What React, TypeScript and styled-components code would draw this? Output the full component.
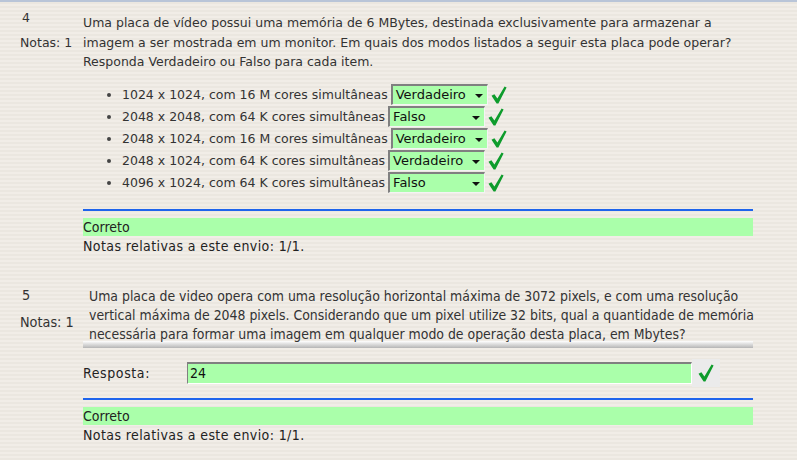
import React from "react";
import styled, { createGlobalStyle } from "styled-components";

const GlobalStyle = createGlobalStyle`
  html, body {
    margin: 0;
    padding: 0;
  }
  body {
    background-color: #efebe4;
    background-image: repeating-linear-gradient(
      to bottom,
      #f1ede7 0px,
      #f1ede7 2px,
      #ebe7e0 2px,
      #ebe7e0 4px
    );
    color: #333;
    font-family: "DejaVu Sans", Verdana, sans-serif;
  }
`;

const condensed = `"DejaVu Sans Condensed", "DejaVu Sans", sans-serif`;

const Page = styled.div`
  border-top: 2px solid #b9c5d8;
  width: 797px;
  height: 458px;
  overflow: hidden;
`;

const Question = styled.div<{ $top: number }>`
  display: grid;
  grid-template-columns: 83px 670px;
  padding-top: ${({ $top }) => $top}px;
`;

const Info = styled.div<{ $condensed?: boolean }>`
  padding-left: 20px;
  font-family: ${({ $condensed }) => ($condensed ? condensed : `"DejaVu Sans", sans-serif`)};
  font-size: ${({ $condensed }) => ($condensed ? "14.3px" : "12.5px")};
  line-height: 20px;
`;

const Number = styled.div<{ $top: number }>`
  padding-left: 2px;
  margin-top: ${({ $top }) => $top}px;
`;

const Grade = styled.div<{ $gap: number }>`
  margin-top: ${({ $gap }) => $gap}px;
`;

const Content = styled.div``;

const Text = styled.div`
  font-size: 12.5px;
  line-height: 19.5px;
  white-space: nowrap;
`;

const CondensedText = styled.div`
  font-family: ${condensed};
  font-size: 13.9px;
  line-height: 19px;
  padding-left: 6px;
  white-space: nowrap;
`;

const Options = styled.ul`
  margin: 12px 0 0;
  padding-left: 39px;
  font-size: 12.5px;
  list-style: disc;
`;

const Option = styled.li`
  height: 22px;
  line-height: 22px;

  &::marker {
    color: #444;
  }
`;

const OptionRow = styled.span`
  display: inline-flex;
  align-items: center;
  gap: 3px;
  vertical-align: top;
  height: 22px;
`;

const Select = styled.span`
  display: inline-flex;
  align-items: center;
  justify-content: space-between;
  box-sizing: border-box;
  width: 97px;
  height: 21px;
  padding: 0 4px 0 3px;
  background: #aaffaa;
  border-top: 2px solid #808080;
  border-left: 2px solid #808080;
  border-right: 1px solid #f4f4f4;
  border-bottom: 1px solid #f4f4f4;
  font-size: 13px;
  color: #111;
`;

const Arrow = styled.span`
  width: 0;
  height: 0;
  border-left: 4px solid transparent;
  border-right: 4px solid transparent;
  border-top: 4px solid #111;
  margin-top: 1px;
`;

const BlueRule = styled.div<{ $top: number }>`
  margin-top: ${({ $top }) => $top}px;
  height: 2px;
  background: #1e64ec;
`;

const Feedback = styled.div`
  margin-top: 7px;
  height: 18px;
  line-height: 18px;
  background: #aaffaa;
  font-family: ${condensed};
  font-size: 14px;
  color: #222;
`;

const Summary = styled.div`
  font-family: ${condensed};
  font-size: 14px;
  letter-spacing: 0.4px;
  line-height: 18px;
  margin-top: 1px;
  color: #222;
`;

const Separator = styled.div`
  margin-top: -3px;
  height: 7px;
  background: linear-gradient(to bottom, #ffffff 0%, #e4e4e4 35%, #c8c8c8 75%, #b4b4b4 100%);
`;

const AnswerRow = styled.div`
  display: flex;
  align-items: center;
  margin-top: 11px;
  height: 28px;
`;

const AnswerLabel = styled.span`
  width: 104px;
  font-family: ${condensed};
  font-size: 14px;
  letter-spacing: 0.6px;
  color: #222;
`;

const AnswerInput = styled.span`
  box-sizing: border-box;
  width: 505px;
  height: 22px;
  line-height: 19px;
  padding-left: 2px;
  background: #aaffaa;
  border-top: 2px solid #808080;
  border-left: 1px solid #808080;
  border-right: 1px solid #ffffff;
  border-bottom: 1px solid #ffffff;
  font-family: ${condensed};
  font-size: 14px;
  color: #111;
`;

const MarkBox = styled.span`
  display: flex;
  align-items: center;
  justify-content: center;
  width: 28px;
  height: 28px;
  background: #ebebeb;
`;

const Check = () => (
  <svg width="16" height="18" viewBox="0 0 16 18">
    <path
      d="M0.5 9.8 L3.4 8.2 L6.4 12.4 L13.6 0.6 L15.6 1.6 L7.4 17.4 L5.6 17.4 Z"
      fill="#0e9c2c"
    />
  </svg>
);

const options: { label: string; value: string }[] = [
  { label: "1024 x 1024, com 16 M cores simultâneas", value: "Verdadeiro" },
  { label: "2048 x 2048, com 64 K cores simultâneas", value: "Falso" },
  { label: "2048 x 1024, com 16 M cores simultâneas", value: "Verdadeiro" },
  { label: "2048 x 1024, com 64 K cores simultâneas", value: "Verdadeiro" },
  { label: "4096 x 1024, com 64 K cores simultâneas", value: "Falso" },
];

export default function App() {
  return (
    <>
      <GlobalStyle />
      <Page>
        <Question $top={11}>
          <Info>
            <Number $top={-5}>4</Number>
            <Grade $gap={5}>Notas: 1</Grade>
          </Info>
          <Content>
            <Text>
              Uma placa de vídeo possui uma memória de 6 MBytes, destinada exclusivamente para armazenar a
              <br />
              imagem a ser mostrada em um monitor. Em quais dos modos listados a seguir esta placa pode operar?
              <br />
              Responda Verdadeiro ou Falso para cada item.
            </Text>
            <Options>
              {options.map((o) => (
                <Option key={o.label + o.value}>
                  <OptionRow>
                    {o.label}
                    <Select>
                      {o.value}
                      <Arrow />
                    </Select>
                    <Check />
                  </OptionRow>
                </Option>
              ))}
            </Options>
            <BlueRule $top={15} />
            <Feedback>Correto</Feedback>
            <Summary>Notas relativas a este envio: 1/1.</Summary>
          </Content>
        </Question>

        <Question $top={32}>
          <Info $condensed>
            <Number $top={-2}>5</Number>
            <Grade $gap={7}>Notas: 1</Grade>
          </Info>
          <Content>
            <CondensedText>
              Uma placa de video opera com uma resolução horizontal máxima de 3072 pixels, e com uma resolução
              <br />
              vertical máxima de 2048 pixels. Considerando que um pixel utilize 32 bits, qual a quantidade de memória
              <br />
              necessária para formar uma imagem em qualquer modo de operação desta placa, em Mbytes?
            </CondensedText>
            <Separator />
            <AnswerRow>
              <AnswerLabel>Resposta:</AnswerLabel>
              <AnswerInput>24</AnswerInput>
              <MarkBox>
                <Check />
              </MarkBox>
            </AnswerRow>
            <BlueRule $top={11} />
            <Feedback>Correto</Feedback>
            <Summary>Notas relativas a este envio: 1/1.</Summary>
          </Content>
        </Question>
      </Page>
    </>
  );
}
